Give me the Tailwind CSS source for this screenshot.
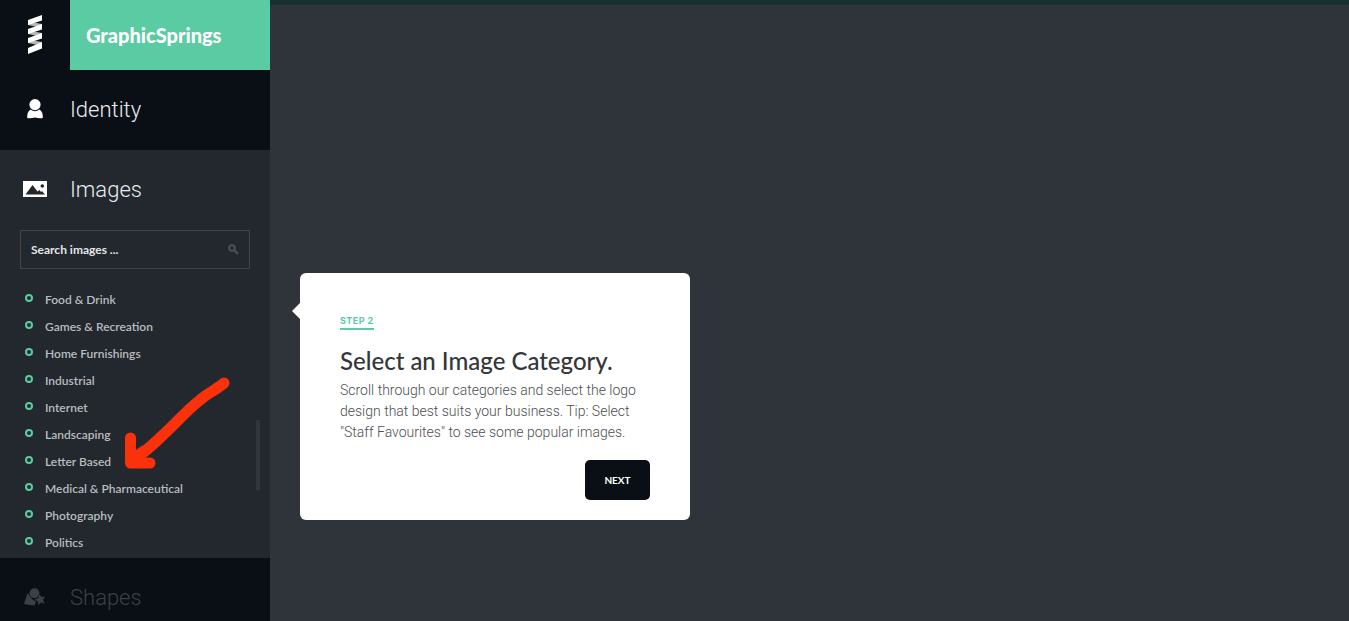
<!DOCTYPE html>
<html lang="en">
<head>
<meta charset="utf-8">
<meta name="viewport" content="width=device-width, initial-scale=1">
<title>GraphicSprings</title>
<script src="https://cdn.jsdelivr.net/npm/@tailwindcss/browser@4"></script>
</head>
<body class="flex h-screen overflow-hidden bg-[#2f333a] font-['Lato',sans-serif]">

<aside class="relative w-[270px] shrink-0 bg-[#090f15] text-[#e9ecef]">
  <header class="flex h-[70px]">
    <div class="flex w-[70px] items-center justify-center">
      <svg class="h-10 w-4" viewBox="0 0 16 40" aria-hidden="true">
        <path fill="#b4b6b8" d="M1 6.500L15 9v4L1 10zM1 15.500L15 18v4L1 19zM1 24.500L15 27v4L1 28z"/>
        <path fill="#fff" d="M1 5L15 0v5.500L1 10zM1 14L15 9v5.500L1 19zM1 23L15 18v5.500L1 28zM1 33L15 27v6.500L1 39z"/>
      </svg>
    </div>
    <a href="#" class="flex flex-1 items-center bg-[#5acba2] pl-4 text-xl font-black text-white">GraphicSprings</a>
  </header>

  <nav aria-label="Logo editor">
    <a href="#" class="flex h-20 items-center pb-[2px] font-['Roboto',sans-serif] text-[22px] font-light">
      <span class="flex w-[70px] justify-center">
        <svg class="h-5 w-4" viewBox="0 0 16 20" fill="#fff" aria-hidden="true"><circle cx="8" cy="5.600" r="5.600"/><path d="M3.500 10.500Q8 14 12.500 10.500C15 12 16 15 15.800 19Q12 19.800 8 18.500Q4 19.800.2 19C0 15 1 12 3.500 10.500z"/></svg>
      </span>
      Identity
    </a>

    <section class="bg-[#22282e] px-5 pb-[2px]">
      <a href="#" class="-mx-5 flex h-20 items-center pb-[2px] font-['Roboto',sans-serif] text-[22px] font-light">
        <span class="flex w-[70px] justify-center">
          <svg class="h-4 w-6" viewBox="0 0 24 16" aria-hidden="true"><path fill="#fff" d="M0 0h24v16H0z"/><path fill="#22282e" d="M2.500 13.500L9.500 4l5 6.500L16.500 9l1.500 2 1-1 3 3.500z"/><circle cx="19.300" cy="5" r="1.800" fill="#22282e"/></svg>
        </span>
        Images
      </a>

      <label class="flex h-[39px] items-center border border-[#40454b] px-[10px]">
        <input type="search" aria-label="Search images" placeholder="Search images ..." class="min-w-0 flex-1 bg-transparent text-xs font-bold outline-none placeholder:text-[#e4e6e8]">
        <svg class="h-[11px] w-[11px]" viewBox="0 0 11 11" fill="none" stroke="#4a5056" aria-hidden="true"><circle cx="4" cy="4" r="2.800" stroke-width="2"/><path d="M6.500 6.500l3.500 3.500" stroke-width="2.400"/></svg>
      </label>

      <ul class="mt-[17px] text-xs font-semibold text-[#b9bcbf]">
        <li class="flex h-[27px] items-center"><span class="mr-3 mb-1 ml-[5px] size-2 rounded-full border-2 border-[#5acba2]"></span><a href="#">Food &amp; Drink</a></li>
        <li class="flex h-[27px] items-center"><span class="mr-3 mb-1 ml-[5px] size-2 rounded-full border-2 border-[#5acba2]"></span><a href="#">Games &amp; Recreation</a></li>
        <li class="flex h-[27px] items-center"><span class="mr-3 mb-1 ml-[5px] size-2 rounded-full border-2 border-[#5acba2]"></span><a href="#">Home Furnishings</a></li>
        <li class="flex h-[27px] items-center"><span class="mr-3 mb-1 ml-[5px] size-2 rounded-full border-2 border-[#5acba2]"></span><a href="#">Industrial</a></li>
        <li class="flex h-[27px] items-center"><span class="mr-3 mb-1 ml-[5px] size-2 rounded-full border-2 border-[#5acba2]"></span><a href="#">Internet</a></li>
        <li class="flex h-[27px] items-center"><span class="mr-3 mb-1 ml-[5px] size-2 rounded-full border-2 border-[#5acba2]"></span><a href="#">Landscaping</a></li>
        <li class="flex h-[27px] items-center"><span class="mr-3 mb-1 ml-[5px] size-2 rounded-full border-2 border-[#5acba2]"></span><a href="#">Letter Based</a></li>
        <li class="flex h-[27px] items-center"><span class="mr-3 mb-1 ml-[5px] size-2 rounded-full border-2 border-[#5acba2]"></span><a href="#">Medical &amp; Pharmaceutical</a></li>
        <li class="flex h-[27px] items-center"><span class="mr-3 mb-1 ml-[5px] size-2 rounded-full border-2 border-[#5acba2]"></span><a href="#">Photography</a></li>
        <li class="flex h-[27px] items-center"><span class="mr-3 mb-1 ml-[5px] size-2 rounded-full border-2 border-[#5acba2]"></span><a href="#">Politics</a></li>
      </ul>
    </section>

    <a href="#" class="flex h-20 items-center pb-[2px] font-['Roboto',sans-serif] text-[22px] font-light text-[#3b4047]">
      <span class="flex w-[70px] justify-center">
        <svg class="h-[18px] w-[22px]" viewBox="0 0 22 18" fill="#3b4047" aria-hidden="true"><circle cx="10.500" cy="5.200" r="5"/><path d="M3.500 5L9 12l3 1-1.500 4.500L6 17l-6-1z"/><path stroke="#090f15" stroke-width=".6" d="M15.500 5.500l1.800 3.300 4.500-.6-2.600 3.700 2.200 4-4.200-1.200-3.200 3-.3-4.200-4-1.700 4-1.800z"/></svg>
      </span>
      Shapes
    </a>
  </nav>

  <!-- Scroll thumb of the category list -->
  <div class="absolute top-[420px] right-[10px] h-[70px] w-1 bg-[#30363d]"></div>

  <!-- Hand-drawn arrow pointing at "Letter Based" -->
  <svg class="absolute top-[370px] left-[120px] h-[105px] w-[115px]" viewBox="0 0 115 105" fill="none" stroke="#f9320b" stroke-width="11" stroke-linecap="round" stroke-linejoin="round" aria-hidden="true">
    <path d="M104 13C99 18 88 23 80 30C66 41 56 53 44 64C34 74 22 84 11 92"/>
    <path d="M10.500 68V93H30"/>
    <path d="M12 90L24 81"/>
  </svg>
</aside>

<main class="relative flex-1 border-t-[5px] border-[#1a2f30]">
  <div role="dialog" aria-labelledby="tip-title" class="absolute top-[268px] left-[30px] w-[390px] rounded-md bg-white px-10 pt-10 pb-5 text-[#33363a]">
    <svg class="absolute top-[30px] -left-2 h-4 w-2" viewBox="0 0 8 16" fill="#fff" aria-hidden="true"><path d="M8 0v16L0 8z"/></svg>
    <p class="flex font-['Inter',sans-serif] text-[9px] leading-[15px] font-bold tracking-wider text-[#5acba2]"><span class="border-b-2 border-[#5acba2]">STEP 2</span></p>
    <h2 id="tip-title" class="mt-[15px] text-2xl leading-8 font-medium">Select an Image Category.</h2>
    <p class="mt-[3px] pr-2 font-['Roboto',sans-serif] text-sm leading-[21px] font-light text-[#4b4e52]">Scroll through our categories and select the logo design that best suits your business. Tip: Select "Staff Favourites" to see some popular images.</p>
    <div class="mt-[17px] flex justify-end">
      <button type="button" class="h-10 w-[65px] rounded-[5px] bg-[#090f15] text-[10px] font-bold text-white">NEXT</button>
    </div>
  </div>
</main>
</body>
</html>
